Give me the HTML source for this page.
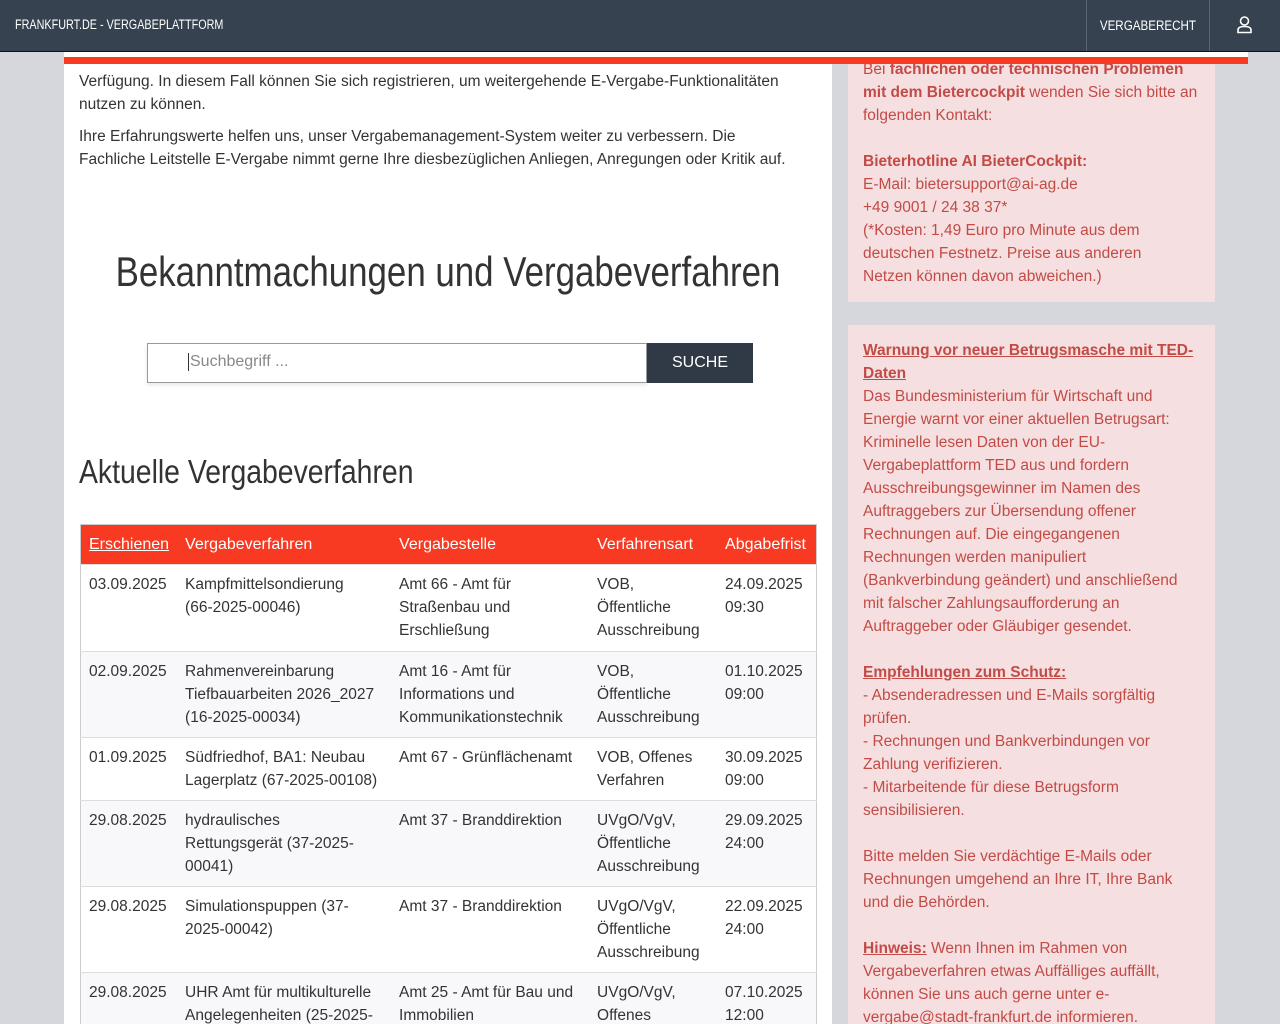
<!DOCTYPE html>
<html><head><meta charset="utf-8"><style>
*{margin:0;padding:0;box-sizing:border-box}
html,body{width:1280px;height:1024px;overflow:hidden}
body{background:#d6d7dc;font-family:"Liberation Sans",sans-serif;font-size:16px;color:#333;position:relative}
#hdr{position:absolute;left:0;top:0;width:1280px;height:52px;background:#36424f;border-bottom:1px solid #111}
#hdr .t{position:absolute;left:15px;top:17px;color:#fff;font-size:13.5px;transform:scaleX(.8);transform-origin:left;white-space:nowrap}
#hdr .vr{position:absolute;left:1086px;top:0;width:124px;height:51px;border-left:1px solid #5b6672;border-right:1px solid #5b6672;color:#fff;font-size:13.5px;text-align:center;line-height:51px}
#hdr .vr span{display:inline-block;transform:scaleX(.86)}
#main{position:absolute;left:64px;top:52px;width:768px;height:980px;background:#fff}
#strip{position:absolute;left:64px;top:52px;width:1184px;height:6px;background:#fff}
#red{position:absolute;left:64px;top:57px;width:1184px;height:7px;background:#f83a22}
.p{position:absolute;left:79px;line-height:23px;white-space:nowrap;font-size:15.5px}
h1{position:absolute;left:448px;top:248px;font-weight:normal;font-size:42px;color:#333;white-space:nowrap;transform:translateX(-50%) scaleX(.83)}
h2{position:absolute;left:79px;top:453px;font-weight:normal;font-size:33px;color:#333;white-space:nowrap;transform:scaleX(.86);transform-origin:left}
#search{position:absolute;left:147px;top:343px;width:500px;height:40px;border:1px solid #999;box-shadow:0 2px 4px rgba(0,0,0,.1)}
#search span{position:absolute;left:40px;top:9px;color:#888;font-size:16px;border-left:1px solid #333;padding-left:1px}
#btn{position:absolute;left:647px;top:343px;width:106px;height:40px;background:#2f3a46;color:#fff;text-align:center;line-height:40px;font-size:16px}
table{position:absolute;left:80px;top:524px;width:737px;border-collapse:collapse;border:1px solid #ccc;font-size:15.5px}
th{background:#f83a22;color:#fff;font-weight:normal;text-align:left;height:40px;padding:0 8px;vertical-align:middle;font-size:16px}
td{vertical-align:top;padding:8px 8px 8px 8px;line-height:23px;white-space:nowrap;border-top:1px solid #ddd}
tr:nth-child(odd) td{background:#f8f8fa}
.side{position:absolute;left:848px;width:367px;background:#f5dfe1;color:#c34b45;font-size:15.5px;line-height:23px;padding-left:15px;white-space:nowrap}
.side u{font-weight:bold}
</style></head><body>
<div id="main"></div>
<div class="p" style="top:70px">Verfügung. In diesem Fall können Sie sich registrieren, um weitergehende E-Vergabe-Funktionalitäten<br>nutzen zu können.</div>
<div class="p" style="top:125px">Ihre Erfahrungswerte helfen uns, unser Vergabemanagement-System weiter zu verbessern. Die<br>Fachliche Leitstelle E-Vergabe nimmt gerne Ihre diesbezüglichen Anliegen, Anregungen oder Kritik auf.</div>
<h1>Bekanntmachungen und Vergabeverfahren</h1>
<div id="search"><span>Suchbegriff ...</span></div>
<div id="btn">SUCHE</div>
<h2>Aktuelle Vergabeverfahren</h2>
<table>
<tr><th style="width:96px"><u>Erschienen</u></th><th style="width:214px">Vergabeverfahren</th><th style="width:198px">Vergabestelle</th><th style="width:128px">Verfahrensart</th><th>Abgabefrist</th></tr>
<tr style="height:87px"><td>03.09.2025</td><td>Kampfmittelsondierung<br>(66-2025-00046)</td><td>Amt 66 - Amt für<br>Straßenbau und<br>Erschließung</td><td>VOB,<br>Öffentliche<br>Ausschreibung</td><td>24.09.2025<br>09:30</td></tr>
<tr style="height:86px"><td>02.09.2025</td><td>Rahmenvereinbarung<br>Tiefbauarbeiten 2026_2027<br>(16-2025-00034)</td><td>Amt 16 - Amt für<br>Informations und<br>Kommunikationstechnik</td><td>VOB,<br>Öffentliche<br>Ausschreibung</td><td>01.10.2025<br>09:00</td></tr>
<tr style="height:62px"><td>01.09.2025</td><td>Südfriedhof, BA1: Neubau<br>Lagerplatz (67-2025-00108)</td><td>Amt 67 - Grünflächenamt</td><td>VOB, Offenes<br>Verfahren</td><td>30.09.2025<br>09:00</td></tr>
<tr style="height:85px"><td>29.08.2025</td><td>hydraulisches<br>Rettungsgerät (37-2025-<br>00041)</td><td>Amt 37 - Branddirektion</td><td>UVgO/VgV,<br>Öffentliche<br>Ausschreibung</td><td>29.09.2025<br>24:00</td></tr>
<tr style="height:86px"><td>29.08.2025</td><td>Simulationspuppen (37-<br>2025-00042)</td><td>Amt 37 - Branddirektion</td><td>UVgO/VgV,<br>Öffentliche<br>Ausschreibung</td><td>22.09.2025<br>24:00</td></tr>
<tr><td>29.08.2025</td><td>UHR Amt für multikulturelle<br>Angelegenheiten (25-2025-</td><td>Amt 25 - Amt für Bau und<br>Immobilien</td><td>UVgO/VgV,<br>Offenes</td><td>07.10.2025<br>12:00</td></tr>
</table>
<div class="side" style="top:40px;height:262px;padding-top:18px">Bei <b>fachlichen oder technischen Problemen<br>mit dem Bietercockpit</b> wenden Sie sich bitte an<br>folgenden Kontakt:<br><br><b>Bieterhotline AI BieterCockpit:</b><br>E-Mail: bietersupport@ai-ag.de<br>+49 9001 / 24 38 37*<br>(*Kosten: 1,49 Euro pro Minute aus dem<br>deutschen Festnetz. Preise aus anderen<br>Netzen können davon abweichen.)</div>
<div class="side" style="top:325px;height:700px;padding-top:14px"><u>Warnung vor neuer Betrugsmasche mit TED-<br>Daten</u><br>Das Bundesministerium für Wirtschaft und<br>Energie warnt vor einer aktuellen Betrugsart:<br>Kriminelle lesen Daten von der EU-<br>Vergabeplattform TED aus und fordern<br>Ausschreibungsgewinner im Namen des<br>Auftraggebers zur Übersendung offener<br>Rechnungen auf. Die eingegangenen<br>Rechnungen werden manipuliert<br>(Bankverbindung geändert) und anschließend<br>mit falscher Zahlungsaufforderung an<br>Auftraggeber oder Gläubiger gesendet.<br><br><u>Empfehlungen zum Schutz:</u><br>- Absenderadressen und E-Mails sorgfältig<br>prüfen.<br>- Rechnungen und Bankverbindungen vor<br>Zahlung verifizieren.<br>- Mitarbeitende für diese Betrugsform<br>sensibilisieren.<br><br>Bitte melden Sie verdächtige E-Mails oder<br>Rechnungen umgehend an Ihre IT, Ihre Bank<br>und die Behörden.<br><br><u>Hinweis:</u> Wenn Ihnen im Rahmen von<br>Vergabeverfahren etwas Auffälliges auffällt,<br>können Sie uns auch gerne unter e-<br>vergabe@stadt-frankfurt.de informieren.</div>
<div id="strip"></div>
<div id="red"></div>
<div id="hdr"><div class="t">FRANKFURT.DE - VERGABEPLATTFORM</div><div class="vr"><span>VERGABERECHT</span></div>
<svg style="position:absolute;left:1236px;top:16px" width="17" height="18" viewBox="0 0 17 18" fill="none" stroke="#fff" stroke-width="1.6"><circle cx="8.5" cy="5" r="4"/><path d="M2 16.5v-2.5c0-2 2-3.5 6.5-3.5s6.5 1.5 6.5 3.5v2.5z"/></svg></div>
</body></html>
